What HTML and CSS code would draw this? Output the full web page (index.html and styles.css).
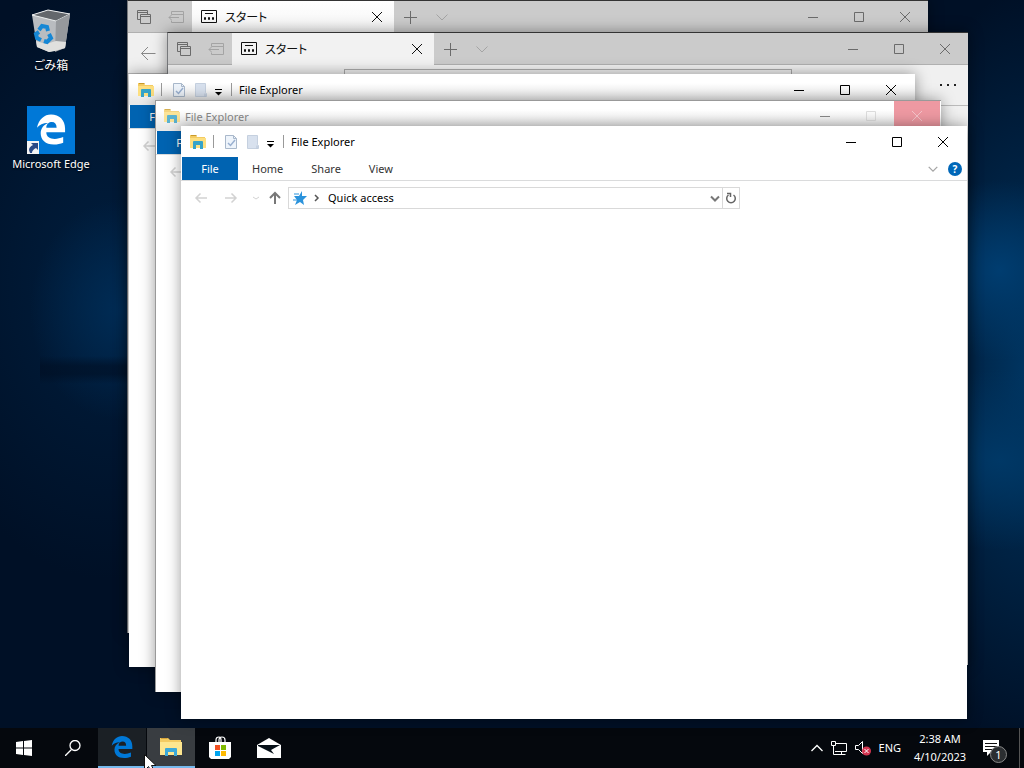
FILE: index.html
```html
<!DOCTYPE html>
<html lang="en">
	<head>
		<meta charset="UTF-8">
		<meta name="viewport" content="width=device-width, initial-scale=1">
		<title>Desktop</title>
		<link rel="stylesheet" href="styles.css">
	</head>
	<body>
		<!-- shared icons -->
		<svg class="defs" aria-hidden="true">
			<symbol id="i-min" viewBox="0 0 12 12"><path d="M1 6.500h10" fill="none" stroke="currentColor"/></symbol>
			<symbol id="i-max" viewBox="0 0 12 12"><path d="M1.500 1.500h9v9h-9z" fill="none" stroke="currentColor"/></symbol>
			<symbol id="i-close" viewBox="0 0 12 12"><path d="M1 1l10 10M11 1L1 11" fill="none" stroke="currentColor"/></symbol>
			<symbol id="i-plus" viewBox="0 0 14 14"><path d="M7.500 1v13M1 7.500h13" fill="none" stroke="currentColor"/></symbol>
			<symbol id="i-down" viewBox="0 0 14 14"><path d="M1.500 4.500l5.500 5.500 5.500-5.500" fill="none" stroke="currentColor"/></symbol>
			<symbol id="i-back" viewBox="0 0 16 16"><path d="M15.500 8.500H1.500M8 2L1.500 8.500 8 15" fill="none" stroke="currentColor"/></symbol>
			<symbol id="i-tabs" viewBox="0 0 16 16"><path d="M4.500 10.500h-3v-9h10v4M1.500 3.500h10M4.500 5.500h10v9h-10zM4.500 7.500h10" fill="none" stroke="currentColor"/></symbol>
			<symbol id="i-aside" viewBox="0 0 16 16"><path d="M3.500 5.500v-3h12v11h-12v-2M3.500 5.500h12M1 8.500h10M3.500 6L1 8.500 3.500 11" fill="none" stroke="currentColor"/></symbol>
			<symbol id="i-start" viewBox="0 0 16 14"><path d="M.5.500h15v12H.5zM4 3.500h8" fill="none" stroke="currentColor"/><path d="M3.500 7.500h1v2h-1zM7.500 7.500h1v2h-1zM11.500 7.500h1v2h-1z" fill="none" stroke="currentColor"/></symbol>
			<symbol id="i-folder" viewBox="0 0 16 16"><path d="M0 1h6l1 2h8v4H0z" fill="#f3cb62"/><path d="M1 1h5l1 1H1z" fill="#c99a2a"/><path d="M0 4h16v10H0z" fill="#fddf80"/><path d="M3 15V8q0-1 1-1h8q1 0 1 1v7h-3v-4H6v4z" fill="#35a3c9"/></symbol>
			<symbol id="i-folder-big" viewBox="0 0 22 20"><path d="M0 1h8l2 2h11v6H0z" fill="#f3cb62"/><path d="M1 1h6l1 1H1z" fill="#d6a43a"/><path d="M0 5h22v13H0z" fill="#fde68f"/><path d="M5 19v-7q0-1 1-1h10q1 0 1 1v7h-3v-4H8v4z" fill="#3ba8d8"/></symbol>
			<symbol id="i-props" viewBox="0 0 14 16"><path d="M1.500 1.500h8l3 3v10h-11z" fill="#eef4fb" stroke="#a9b8cb"/><path d="M9.500 1.500v3h3" fill="none" stroke="#a9b8cb"/><path d="M4 9l2.500 2.500L11 6" fill="none" stroke="#9ab0d0" stroke-width="1.500"/></symbol>
			<symbol id="i-new" viewBox="0 0 14 16"><path d="M1.500 1.500h10v9l1 1v3h-11z" fill="#d8e1ee" stroke="#c5d0df"/><path d="M11 11.500v3" stroke="#b4c2d6"/></symbol>
			<symbol id="i-menu" viewBox="0 0 8 8"><path d="M1 1.500h7" stroke="currentColor"/><path d="M1 4h7L4.500 7.500z" fill="currentColor"/></symbol>
			<symbol id="i-arrow" viewBox="0 0 14 14"><path d="M13 7H2M6.500 2.500L2 7l4.500 4.500" fill="none" stroke="currentColor" stroke-width="1.500"/></symbol>
			<symbol id="i-e" viewBox="0 0 32 32"><path d="M1 14C3 5 9 0 16 0c9 0 15 6 15 15v4H11c0 5 4 7 9 7 3 0 6-1 9-2v6c-3 1-6 2-10 2C10 32 5 27 5 20c0-5 3-9 8-11-6 0-9 2-12 5zm10 0h11c0-4-2-6-5-6s-6 2-6 6z" fill="currentColor" fill-rule="evenodd"/></symbol>
		</svg>

		<main class="desktop">
			<nav class="shortcuts">
				<a class="shortcut" href="#trash">
					<svg class="shortcut-icon" viewBox="0 0 48 48">
						<path d="M5 8l16-5 22 4-5 34-16 4-12-5z" fill="#b9bcc0"/>
						<path d="M5 8l16-5 22 4-14 7z" fill="#63676c" stroke="#eceeef"/>
						<path d="M29 14l14-7-5 34-10 4z" fill="#96999d"/>
						<path d="M9 34l10 3 10-3 10 1-1 6-10 3-6 1-12-5z" fill="#e0e0de"/>
						<path d="M12 23l3-4 5 1 1 4M22 27l2 4-4 4-3-1M14 33l-4-2-1-4 3-2" fill="none" stroke="#1687d5" stroke-width="4"/>
					</svg>
					<span lang="ja">ごみ箱</span>
				</a>
				<a class="shortcut" href="#edge">
					<svg class="shortcut-icon" viewBox="0 0 48 48">
						<path d="M0 0h48v48H0z" fill="#0078d7"/>
						<use href="#i-e" x="9" y="8" width="30" height="31" color="#fff"/>
						<path d="M0 35h12v13H0z" fill="#f4f4f4"/>
						<path d="M3 47l-1-3q0-3 4-5L4 37h7v7l-2-2q-4 2-4 5z" fill="#2b4a86"/>
					</svg>
					<span>Microsoft Edge</span>
				</a>
			</nav>

			<section class="window edge edge-1">
				<header class="edge-bar">
					<div class="edge-tools">
						<button aria-label="Tabs"><svg class="i16"><use href="#i-tabs"/></svg></button>
						<button class="dim" aria-label="Set aside"><svg class="i16"><use href="#i-aside"/></svg></button>
					</div>
					<div class="edge-tab">
						<svg class="i16"><use href="#i-start"/></svg>
						<span lang="ja">スタート</span>
						<button aria-label="Close tab"><svg class="i12"><use href="#i-close"/></svg></button>
					</div>
					<button class="edge-new" aria-label="New tab"><svg class="i14"><use href="#i-plus"/></svg></button>
					<button class="edge-new dim" aria-label="Previews"><svg class="i14"><use href="#i-down"/></svg></button>
					<div class="caption">
						<button aria-label="Minimize"><svg class="i12"><use href="#i-min"/></svg></button>
						<button aria-label="Maximize"><svg class="i12"><use href="#i-max"/></svg></button>
						<button aria-label="Close"><svg class="i12"><use href="#i-close"/></svg></button>
					</div>
				</header>
				<div class="edge-nav">
					<button aria-label="Back"><svg class="i16"><use href="#i-back"/></svg></button>
				</div>
			</section>

			<section class="window edge edge-2">
				<header class="edge-bar">
					<div class="edge-tools">
						<button aria-label="Tabs"><svg class="i16"><use href="#i-tabs"/></svg></button>
						<button class="dim" aria-label="Set aside"><svg class="i16"><use href="#i-aside"/></svg></button>
					</div>
					<div class="edge-tab">
						<svg class="i16"><use href="#i-start"/></svg>
						<span lang="ja">スタート</span>
						<button aria-label="Close tab"><svg class="i12"><use href="#i-close"/></svg></button>
					</div>
					<button class="edge-new" aria-label="New tab"><svg class="i14"><use href="#i-plus"/></svg></button>
					<button class="edge-new dim" aria-label="Previews"><svg class="i14"><use href="#i-down"/></svg></button>
					<div class="caption">
						<button aria-label="Minimize"><svg class="i12"><use href="#i-min"/></svg></button>
						<button aria-label="Maximize"><svg class="i12"><use href="#i-max"/></svg></button>
						<button aria-label="Close"><svg class="i12"><use href="#i-close"/></svg></button>
					</div>
				</header>
				<div class="edge-nav">
					<button aria-label="Back"><svg class="i16"><use href="#i-back"/></svg></button>
					<input class="edge-url" type="text" aria-label="Address">
					<button class="edge-more" aria-label="More"><svg class="i16" viewBox="0 0 16 16"><path d="M0 7h2v2H0zM7 7h2v2H7zM14 7h2v2h-2z" fill="#222"/></svg></button>
				</div>
			</section>

			<section class="window explorer explorer-1">
				<header class="title-bar">
					<svg class="i16"><use href="#i-folder"/></svg>
					<i class="sep"></i>
					<button class="quick" aria-label="Properties"><svg class="i16"><use href="#i-props"/></svg></button>
					<button class="quick" aria-label="New folder"><svg class="i16"><use href="#i-new"/></svg></button>
					<button class="quick-menu" aria-label="Customize"><svg class="i8"><use href="#i-menu"/></svg></button>
					<i class="sep"></i>
					<h2>File Explorer</h2>
					<div class="caption">
						<button aria-label="Minimize"><svg class="i12"><use href="#i-min"/></svg></button>
						<button aria-label="Maximize"><svg class="i12"><use href="#i-max"/></svg></button>
						<button aria-label="Close"><svg class="i12"><use href="#i-close"/></svg></button>
					</div>
				</header>
				<div class="ribbon"><button class="file">File</button></div>
				<div class="address-row"><button aria-label="Back"><svg class="i14"><use href="#i-arrow"/></svg></button></div>
			</section>

			<section class="window explorer explorer-2">
				<header class="title-bar">
					<svg class="i16"><use href="#i-folder"/></svg>
					<h2>File Explorer</h2>
					<div class="caption">
						<button aria-label="Minimize"><svg class="i12"><use href="#i-min"/></svg></button>
						<button class="faint" aria-label="Maximize"><svg class="i12"><use href="#i-max"/></svg></button>
						<button class="closing" aria-label="Close"><svg class="i12"><use href="#i-close"/></svg></button>
					</div>
				</header>
				<div class="ribbon"><button class="file">File</button></div>
				<div class="address-row"><button aria-label="Back"><svg class="i14"><use href="#i-arrow"/></svg></button></div>
			</section>

			<section class="window explorer explorer-3">
				<header class="title-bar">
					<svg class="i16"><use href="#i-folder"/></svg>
					<i class="sep"></i>
					<button class="quick" aria-label="Properties"><svg class="i16"><use href="#i-props"/></svg></button>
					<button class="quick" aria-label="New folder"><svg class="i16"><use href="#i-new"/></svg></button>
					<button class="quick-menu" aria-label="Customize"><svg class="i8"><use href="#i-menu"/></svg></button>
					<i class="sep"></i>
					<h2>File Explorer</h2>
					<div class="caption">
						<button aria-label="Minimize"><svg class="i12"><use href="#i-min"/></svg></button>
						<button aria-label="Maximize"><svg class="i12"><use href="#i-max"/></svg></button>
						<button aria-label="Close"><svg class="i12"><use href="#i-close"/></svg></button>
					</div>
				</header>
				<div class="ribbon">
					<button class="file">File</button>
					<button>Home</button>
					<button>Share</button>
					<button>View</button>
					<div class="ribbon-end">
						<button aria-label="Expand ribbon"><svg class="i12" viewBox="0 0 14 14"><path d="M2 4.500l5 5 5-5" fill="none" stroke="#a5a5a5" stroke-width="1.500"/></svg></button>
						<button class="help" aria-label="Help">?</button>
					</div>
				</div>
				<div class="address-row">
					<button aria-label="Back"><svg class="i14"><use href="#i-arrow"/></svg></button>
					<button class="forward" aria-label="Forward"><svg class="i14"><use href="#i-arrow"/></svg></button>
					<button class="recent" aria-label="Recent"><svg class="i8" viewBox="0 0 8 8"><path d="M1 3l3 2 3-2" fill="none" stroke="currentColor"/></svg></button>
					<button class="up" aria-label="Up"><svg class="i14" viewBox="0 0 14 14"><path d="M7 13V2M2 7l5-5 5 5" fill="none" stroke="#777" stroke-width="2"/></svg></button>
					<div class="address">
						<svg class="i14" viewBox="0 0 14 14"><path d="M9 0l0 5 5 0-4 4 1 5-4-3-5 3 2-5-3-4h5z" fill="#2b93dc"/><path d="M1 3h5M0 9h4" stroke="#2b93dc"/></svg>
						<svg class="i8" viewBox="0 0 8 8"><path d="M2 1l3 3-3 3" fill="none" stroke="#555" stroke-width="1.500"/></svg>
						<input type="text" aria-label="Location" value="Quick access">
						<button aria-label="Previous locations"><svg class="i12" viewBox="0 0 12 12"><path d="M2 4.500l4 4 4-4" fill="none" stroke="#777" stroke-width="2"/></svg></button>
						<button class="refresh" aria-label="Refresh"><svg class="i14" viewBox="0 0 14 14"><path d="M9.500 4A4.300 4.300 0 1 1 4.500 4M3 2.500h3.500V6" fill="none" stroke="#666" stroke-width="1.500"/></svg></button>
					</div>
				</div>
			</section>
		</main>

		<footer class="taskbar">
			<button aria-label="Start"><svg class="i16" viewBox="0 0 16 16"><path d="M0 2l7-1v6.500H0zM8 1l8-1v7.500H8zM0 8.500h7V15l-7-1zM8 8.500h8V16l-8-1z" fill="#fff"/></svg></button>
			<button aria-label="Search"><svg class="i16" viewBox="0 0 16 16"><circle cx="10" cy="5.500" r="5" fill="none" stroke="#fff" stroke-width="1.300"/><path d="M6.500 9.500L0 16" stroke="#fff" stroke-width="1.300"/></svg></button>
			<button class="running" aria-label="Microsoft Edge"><svg class="i22"><use href="#i-e"/></svg></button>
			<button class="running active" aria-label="File Explorer"><svg class="i22"><use href="#i-folder-big"/></svg></button>
			<button aria-label="Store"><svg class="i24" viewBox="0 0 24 24"><path d="M8 7V4q0-3 3-3 2 0 2 3v3M11 7V4q0-3 3-3 3 0 3 3v3" fill="none" stroke="#fff" stroke-width="1.200"/><path d="M1 6h22v15l-2 2H3l-2-2z" fill="#fff"/><path d="M7 9h5v5H7z" fill="#f25022"/><path d="M13 9h5v5h-5z" fill="#7fba00"/><path d="M7 15h5v5H7z" fill="#00a4ef"/><path d="M13 15h5v5h-5z" fill="#ffb900"/></svg></button>
			<button aria-label="Mail"><svg class="i24" viewBox="0 0 24 24"><path d="M0 9l12-7 12 7v13H0z" fill="#fff"/><path d="M1 9h22l-9 5 3 4L1 10z" fill="#071018"/></svg></button>

			<div class="tray">
				<button aria-label="Hidden icons"><svg class="i12" viewBox="0 0 12 12"><path d="M.5 9L6 3.500 11.500 9" fill="none" stroke="#fff" stroke-width="1.300"/></svg></button>
				<button aria-label="Network"><svg class="i16" viewBox="0 0 16 16"><path d="M5 3.500h10.500v8H4M.5 1.500h4v4h-4zM2.500 5.500v9h12M10.500 11.500v3" fill="none" stroke="#fff"/></svg></button>
				<button aria-label="Volume"><svg class="i16" viewBox="0 0 16 16"><path d="M.5 5.500h3l4-4v12l-4-4h-3z" fill="none" stroke="#fff"/><circle cx="11.500" cy="11" r="4.500" fill="#d33550"/><path d="M9.500 9l4 4M13.500 9l-4 4" stroke="#fff"/></svg></button>
				<button class="lang">ENG</button>
				<button class="clock"><time>2:38 AM</time><time>4/10/2023</time></button>
				<button class="notice" aria-label="Notifications">
					<svg class="i16" viewBox="0 0 16 16"><path d="M0 0h16v12H8l-4 4v-4H0z" fill="#fff"/><path d="M2 3.500h12M2 6.500h12M2 9.500h8" stroke="#111"/></svg>
					<span class="badge">1</span>
				</button>
			</div>
		</footer>

		<svg class="cursor" viewBox="0 0 13 19" aria-hidden="true"><path d="M.5.500v16l4-4 3 6 3-1-3-6H12z" fill="#fff" stroke="#111"/></svg>
	</body>
</html>
```

FILE: styles.css
```css
* {
	box-sizing: border-box;
}
body {
	margin: 0;
	height: 100vh;
	display: flex;
	flex-direction: column;
	overflow: hidden;
	position: relative;
	font-family: "Noto Sans", "Noto Sans CJK JP", sans-serif;
	font-size: 11px;
	color: #000;
	background:
		linear-gradient(180deg, transparent 356px, rgba(0, 14, 34, 0.6) 366px, rgba(0, 14, 34, 0.6) 374px, transparent 384px) 40px 0 / 90px 100% no-repeat,
		radial-gradient(ellipse 90px 110px at 120px 310px, #002c55, transparent),
		radial-gradient(ellipse 200px 300px at 110px 280px, #001e3e, transparent),
		radial-gradient(ellipse 90px 90px at 1000px 270px, #003d70, transparent),
		radial-gradient(ellipse 120px 90px at 1000px 460px, #003866, transparent),
		radial-gradient(ellipse 140px 380px at 100% 370px, #003460, transparent),
		#001026;
}
.defs {
	display: none;
}
svg {
	display: block;
	flex: none;
}
button, input {
	font: inherit;
	color: inherit;
	background: none;
	border: 0;
	padding: 0;
	margin: 0;
}
button {
	display: flex;
	align-items: center;
	justify-content: center;
}
[lang="ja"] {
	font-family: "Noto Sans CJK JP", sans-serif;
	font-size: 12px;
	font-feature-settings: "palt";
}
.i8 { width: 8px; height: 8px; }
.i12 { width: 12px; height: 12px; }
.i14 { width: 14px; height: 14px; }
.i16 { width: 16px; height: 16px; }
.i22 { width: 22px; height: 22px; }
.i24 { width: 24px; height: 24px; }

/* desktop */
.desktop {
	flex: 1;
	position: relative;
}
.shortcuts {
	width: 102px;
	padding-top: 7px;
	display: flex;
	flex-direction: column;
	gap: 31px;
}
.shortcut {
	display: flex;
	flex-direction: column;
	align-items: center;
	color: #fff;
	text-decoration: none;
	line-height: 20px;
	font-size: 11px;
	text-shadow: 0 1px 2px #000;
}
.shortcut-icon {
	width: 48px;
	height: 48px;
}

/* windows */
.window {
	position: absolute;
	overflow: hidden;
	background: #fff;
	box-shadow: 0 0 14px rgba(0, 0, 0, 0.4);
}
.caption {
	margin-left: auto;
	display: flex;
	align-self: stretch;
}
.caption button {
	width: 46px;
}

.edge {
	border: 1px solid #77797c;
	border-top-color: #333;
	border-width: 1px 0 0 1px;
	background: #f0f0f0;
}
.edge-1 { left: 127px; top: 0; right: 96px; bottom: 95px; }
.edge-2 { left: 167px; top: 32px; right: 56px; bottom: 63px; }
.edge-bar {
	display: flex;
	align-items: center;
	height: 32px;
	background: #cbcbcb;
	color: #6b6b6b;
	border-bottom: 1px solid #b0b0b0;
}
.edge-tools {
	width: 64px;
	display: flex;
}
.edge-tools button, .edge-new {
	width: 32px;
	height: 31px;
}
.dim {
	color: #a4a4a4;
}
.edge-tab {
	width: 202px;
	height: 32px;
	padding: 0 11px 0 9px;
	display: flex;
	align-items: center;
	gap: 8px;
	background: #f2f2f2;
	color: #111;
}
.edge-1 .edge-tab {
	background: linear-gradient(#fff, #f4f4f4);
}
.edge-tab button {
	margin-left: auto;
}
.edge-nav {
	height: 41px;
	display: flex;
	align-items: center;
	padding-left: 12px;
	color: #888;
	border-bottom: 1px solid #bbb;
}
.edge-url {
	flex: 1;
	height: 32px;
	margin: 0 148px 0 148px;
	border: 1px solid #aaa;
}
.edge-more {
	margin-right: 12px;
}

.explorer-1 { left: 129px; top: 74px; right: 109px; bottom: 61px; }
.explorer-2 { left: 155px; top: 100px; right: 83px; bottom: 36px; border-top: 1px solid #999; border-left: 1px solid #999; }
.explorer-3 { left: 181px; top: 126px; right: 57px; bottom: 9px; }
.title-bar {
	height: 31px;
	display: flex;
	align-items: center;
	padding-left: 9px;
}
.explorer-1 .title-bar, .explorer-2 .title-bar {
	background: linear-gradient(#fff 30%, #e8e8e8 90%);
}
.explorer .caption {
	padding-right: 1px;
}
.sep {
	width: 1px;
	height: 13px;
	margin: 0 7px;
	background: #999;
}
.quick {
	width: 22px;
}
.quick:first-of-type {
	margin-left: -1px;
}
.quick-menu {
	width: 12px;
	padding-top: 4px;
}
h2 {
	margin: 0;
	font-size: 11px;
	font-weight: normal;
}
.explorer-2 .title-bar {
	height: 30px;
	color: #888;
	gap: 5px;
	padding-left: 8px;
}
.explorer-2 .title-bar > svg {
	opacity: 0.8;
}
.faint {
	color: #ddd;
}
.closing {
	background: #ee99a2;
	color: #f5c4ca;
}
.ribbon {
	display: flex;
	height: 24px;
	padding-left: 1px;
	border-bottom: 1px solid #dadbdc;
	color: #333;
}
.ribbon > button {
	padding: 0 14px;
	height: 23px;
}
.ribbon .file {
	width: 56px;
	background: #0063b1;
	color: #fff;
}
.ribbon-end {
	margin-left: auto;
	display: flex;
	align-items: center;
	gap: 9px;
	padding-right: 5px;
}
.help {
	width: 14px;
	height: 14px;
	border-radius: 50%;
	background: #0067b8;
	color: #fff;
	font-size: 10px;
	font-weight: bold;
}
.address-row {
	display: flex;
	align-items: center;
	height: 34px;
	padding: 0 227px 0 13px;
	color: #d2d2d2;
}
.forward {
	margin: 0 14px 0 16px;
	transform: scaleX(-1);
}
.recent {
	margin-right: 8px;
}
.up {
	margin-right: 6px;
}
.address {
	flex: 1;
	display: flex;
	align-items: center;
	height: 22px;
	padding-left: 4px;
	gap: 6px;
	border: 1px solid #d9d9d9;
	color: #000;
}
.address input {
	flex: 1;
	min-width: 0;
	height: 20px;
	padding-left: 1px;
	padding-bottom: 2px;
}
.address .refresh {
	width: 17px;
	height: 20px;
	margin-left: -5px;
	border-left: 1px solid #d9d9d9;
}

/* taskbar */
.taskbar {
	height: 40px;
	display: flex;
	gap: 1px;
	background: #05080d;
	color: #fff;
}
.taskbar > button {
	width: 48px;
}
.taskbar .running {
	background: #1b2025;
	border-bottom: 2px solid #76b9ed;
	color: #0078d7;
}
.taskbar .running.active {
	background: #393d41;
}
.tray {
	margin-left: auto;
	display: flex;
	align-items: center;
	gap: 8px;
	border-right: 1px solid #555;
	margin-right: 4px;
}
.clock {
	flex-direction: column;
	width: 62px;
	line-height: 18px;
}
.lang, .clock {
	padding-bottom: 1px;
}
.notice {
	position: relative;
	width: 46px;
	height: 40px;
	margin-left: -6px;
	padding-right: 10px;
}
.badge {
	position: absolute;
	right: 12px;
	bottom: 5px;
	width: 17px;
	height: 17px;
	border: 1px solid #888;
	border-radius: 50%;
	background: #2b2e31;
	line-height: 15px;
}
.cursor {
	position: absolute;
	left: 144px;
	top: calc(100vh - 14px);
	width: 13px;
	height: 19px;
}
```
